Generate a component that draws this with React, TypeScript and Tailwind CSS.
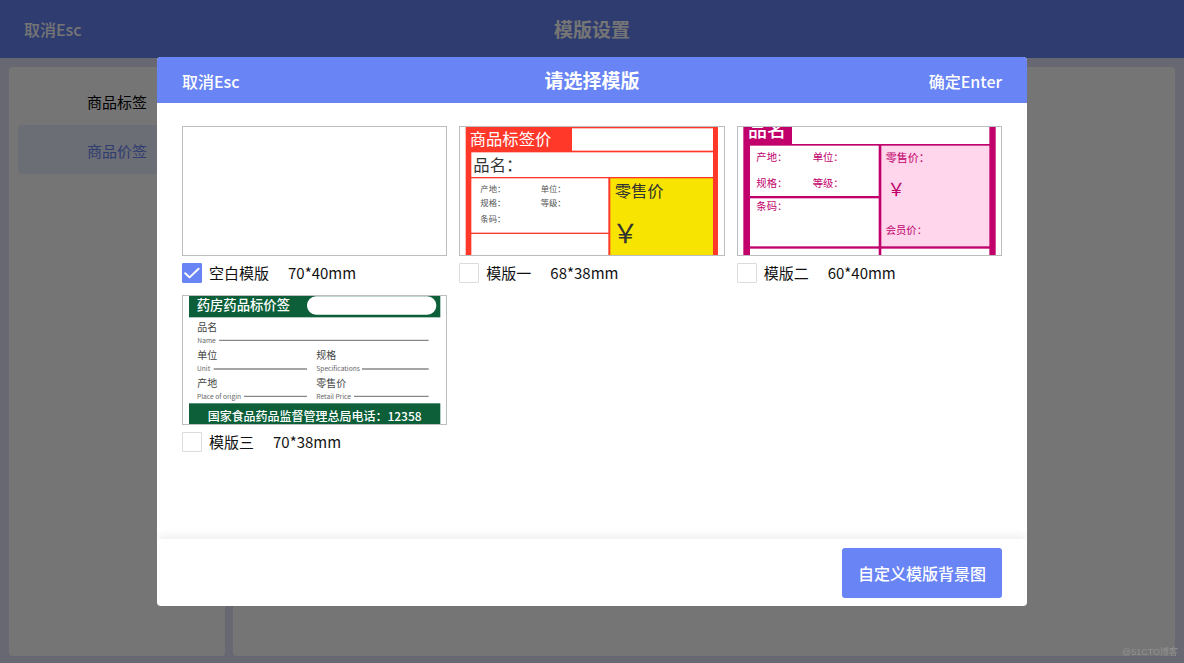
import { useState } from "react";
import type { ReactNode } from "react";

type Template = {
  id: string;
  name: string;
  size: string;
  art: ReactNode;
};

const RED = "#ff3829";
const MAGENTA = "#c1006b";
const GREEN = "#0c5f39";

// label artwork is drawn in a 790 x 384 box and scaled to the card
function TagArt() {
  return (
    <>
      <rect x="17" y="0" width="757" height="384" fill={RED} />
      <g fill="#fff">
        <rect x="336" y="4" width="423" height="67" />
        <rect x="34" y="76" width="725" height="74" />
        <rect x="34" y="154" width="411" height="163" />
        <rect x="34" y="321" width="411" height="63" />
      </g>
      <rect x="451" y="154" width="308" height="230" fill="#f7e400" />
      <text x="29" y="55" fontSize="49" fill="#fff">商品标签价</text>
      <g fill="#333" fontSize="49">
        <text x="40" y="133">品名：</text>
        <text x="464" y="209">零售价</text>
        <text x="456" y="347" fontSize="80">￥</text>
      </g>
      <g fill="#555" fontSize="25">
        <text x="61" y="194">产地：</text>
        <text x="242" y="194">单位：</text>
        <text x="61" y="238">规格：</text>
        <text x="242" y="238">等级：</text>
        <text x="61" y="285">条码：</text>
      </g>
    </>
  );
}

function PriceArt() {
  return (
    <>
      <rect x="16" y="0" width="757" height="384" fill={MAGENTA} />
      <g fill="#fff">
        <rect x="162" y="0" width="592" height="51" />
        <rect x="36" y="56" width="386" height="151" />
        <rect x="36" y="214" width="386" height="144" />
        <rect x="36" y="365" width="386" height="19" />
        <rect x="430" y="365" width="324" height="19" />
      </g>
      <rect x="430" y="56" width="324" height="302" fill="#ffd6eb" />
      <text x="30" y="29" fontSize="57" fontWeight="500" fill="#fff">品名</text>
      <g fill={MAGENTA} fontSize="31">
        <text x="55" y="101">产地：</text>
        <text x="224" y="101">单位：</text>
        <text x="55" y="180">规格：</text>
        <text x="224" y="180">等级：</text>
        <text x="55" y="250">条码：</text>
        <text x="443" y="105" fontSize="33">零售价：</text>
        <text x="448" y="207" fontSize="54">￥</text>
        <text x="443" y="322">会员价：</text>
      </g>
    </>
  );
}

function PharmacyArt() {
  return (
    <>
      <rect x="18" y="0" width="754" height="64" fill={GREEN} />
      <rect x="372" y="1" width="388" height="55" rx="27" fill="#fff" />
      <rect x="18" y="322" width="754" height="62" fill={GREEN} />
      <g fill="#fff" fontWeight="500">
        <text x="41" y="42" fontSize="40">药房药品标价签</text>
        <text x="74" y="375" fontSize="36">国家食品药品监督管理总局电话：12358</text>
      </g>
      <g fill="#444" fontSize="30">
        <text x="43" y="104">品名</text>
        <text x="43" y="190">单位</text>
        <text x="400" y="190">规格</text>
        <text x="43" y="272">产地</text>
        <text x="400" y="272">零售价</text>
      </g>
      <g fill="#666" fontSize="20">
        <text x="43" y="140">Name</text>
        <text x="42" y="226">Unit</text>
        <text x="400" y="226">Specifications</text>
        <text x="42" y="308">Place of origin</text>
        <text x="400" y="308">Retail Price</text>
      </g>
      <path
        d="M108 133H737M92 219H372M537 219H737M183 301H372M513 301H737"
        stroke="#888"
        strokeWidth="4"
      />
    </>
  );
}

const templates: Template[] = [
  { id: "blank", name: "空白模版", size: "70*40mm", art: null },
  { id: "one", name: "模版一", size: "68*38mm", art: <TagArt /> },
  { id: "two", name: "模版二", size: "60*40mm", art: <PriceArt /> },
  { id: "three", name: "模版三", size: "70*38mm", art: <PharmacyArt /> },
];

const categories = ["商品标签", "商品价签"];

function TemplateCard({
  template,
  checked,
  onSelect,
}: {
  template: Template;
  checked: boolean;
  onSelect: () => void;
}) {
  return (
    <label className="block cursor-pointer">
      <svg viewBox="0 0 790 384" className="block w-full border border-[#bdbdbd]" aria-hidden="true">
        {template.art}
      </svg>
      <span className="mt-[7px] flex h-5 items-center">
        <span className="relative h-5 w-5">
          <input
            type="checkbox"
            checked={checked}
            onChange={onSelect}
            className="block h-5 w-5 appearance-none rounded-[1px] border border-[#dcdcdc] bg-white checked:border-[#6884f5] checked:bg-[#6884f5]"
          />
          {checked && (
            <svg
              viewBox="0 0 20 20"
              className="pointer-events-none absolute inset-0 h-5 w-5"
              fill="none"
              stroke="#fff"
              strokeWidth="2"
              strokeLinecap="round"
              strokeLinejoin="round"
            >
              <path d="M3.2 10.2L7.6 14.4L16.6 5.8" />
            </svg>
          )}
        </span>
        <span className="ml-[7px] pt-px">{template.name}</span>
        <span className="ml-[19px] pt-px">{template.size}</span>
      </span>
    </label>
  );
}

export default function App() {
  const [category, setCategory] = useState("商品价签");
  const [selected, setSelected] = useState("blank");

  return (
    <div className="flex min-h-screen flex-col bg-[#e3e3f8] font-['Noto_Sans_CJK_SC',sans-serif] text-[15px] text-[#111]">
      <header className="grid h-[58px] grid-cols-3 items-center bg-[#6884f5] px-6 text-white">
        <button className="justify-self-start text-base font-medium">取消Esc</button>
        <h1 className="text-center text-[19px] font-bold">模版设置</h1>
      </header>

      <main className="flex flex-1 gap-2 px-[9px] pt-[9px] pb-[7px]">
        <nav className="w-[216px] rounded bg-white p-[9px]">
          {categories.map((c) => (
            <button
              key={c}
              onClick={() => setCategory(c)}
              className={
                c === category
                  ? "block h-[49px] w-full rounded bg-[#ebeffe] pt-[3px] text-[#6884f5]"
                  : "block h-[49px] w-full rounded pt-[3px] text-black"
              }
            >
              {c}
            </button>
          ))}
        </nav>
        <section className="flex-1 rounded bg-white" />
      </main>

      <div className="fixed inset-0 flex items-center justify-center bg-black/54">
        <div
          role="dialog"
          aria-modal="true"
          aria-labelledby="dialog-title"
          className="w-full max-w-[870px] overflow-hidden rounded bg-white"
        >
          <div className="grid h-[46px] grid-cols-3 items-center bg-[#6884f5] px-[25px] pt-px text-white">
            <button className="justify-self-start text-base font-medium">取消Esc</button>
            <h2 id="dialog-title" className="text-center text-[19px] font-bold">
              请选择模版
            </h2>
            <button className="justify-self-end text-base font-medium">确定Enter</button>
          </div>

          <div className="grid min-h-[436px] grid-cols-3 content-start gap-3 px-[25px] py-[23px]">
            {templates.map((t) => (
              <TemplateCard
                key={t.id}
                template={t}
                checked={selected === t.id}
                onSelect={() => setSelected(t.id)}
              />
            ))}
          </div>

          <div className="flex h-[67px] items-center justify-end px-[25px] shadow-[0_-2px_10px_rgba(0,0,0,0.08)]">
            <button className="h-[50px] rounded-[3px] bg-[#6884f5] px-4 pt-px text-base font-medium text-white">
              自定义模版背景图
            </button>
          </div>
        </div>
      </div>

      <span className="fixed right-[6px] bottom-1 font-['Liberation_Sans','Noto_Sans_CJK_SC',sans-serif] text-[9px] leading-[14px] text-[#929292]">
        @51CTO博客
      </span>
    </div>
  );
}
